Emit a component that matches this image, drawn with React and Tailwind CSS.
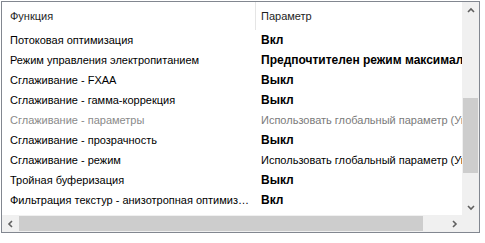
import React from "react";

const rows = [
  { name: "Потоковая оптимизация", value: "Вкл", bold: true },
  { name: "Режим управления электропитанием", value: "Предпочтителен режим максимальной производительности", bold: true },
  { name: "Сглаживание - FXAA", value: "Выкл", bold: true },
  { name: "Сглаживание - гамма-коррекция", value: "Выкл", bold: true },
  { name: "Сглаживание - параметры", value: "Использовать глобальный параметр (Управление от приложения)", muted: true },
  { name: "Сглаживание - прозрачность", value: "Выкл", bold: true },
  { name: "Сглаживание - режим", value: "Использовать глобальный параметр (Управление от приложения)" },
  { name: "Тройная буферизация", value: "Выкл", bold: true },
  { name: "Фильтрация текстур - анизотропная оптимизация", value: "Вкл", bold: true },
];

const Chevron = ({ dir }) => {
  const paths = {
    up: "M1 5 L4 2 L7 5",
    down: "M1 3 L4 6 L7 3",
    left: "M5 1 L2 4 L5 7",
    right: "M3 1 L6 4 L3 7",
  };
  return (
    <svg width="8" height="8" viewBox="0 0 8 8">
      <path d={paths[dir]} fill="none" stroke="#606060" strokeWidth="1.6" />
    </svg>
  );
};

export default function App() {
  return (
    <div className="w-[485px] h-[243px] bg-white pl-px pt-px font-['Liberation_Sans',Arial,sans-serif] text-[11px]">
      <div className="w-[479px] h-[232px] border border-[#828790] flex flex-col">
        <div className="flex flex-1 min-h-0">
          <div className="flex-1 min-w-0 overflow-hidden">
            <div className="flex h-[28px] items-center text-[#1e1e1e]">
              <div className="w-[253px] pl-[8px] shrink-0">Функция</div>
              <div className="h-full border-l border-[#e5e5e5] pl-[5px] flex items-center whitespace-nowrap">Параметр</div>
            </div>
            {rows.map((r, i) => (
              <div key={i} className="flex h-[20px] items-center">
                <div className={`w-[253px] shrink-0 pl-[8px] pr-[4px] truncate ${r.muted ? "text-[#8a8a8a]" : "text-black"}`}>
                  {r.name}
                </div>
                <div
                  className={`pl-[6px] whitespace-nowrap ${r.bold ? "font-bold text-[12px]" : ""} ${r.muted ? "text-[#7a7a7a]" : "text-black"}`}
                >
                  {r.value}
                </div>
              </div>
            ))}
          </div>
          <div className="w-[17px] shrink-0 bg-[#f0f0f0] flex flex-col">
            <div className="h-[17px] flex items-center justify-center">
              <Chevron dir="up" />
            </div>
            <div className="flex-1 pt-[79px] px-px">
              <div className="h-[75px] bg-[#cdcdcd]" />
            </div>
            <div className="h-[17px] flex items-center justify-center">
              <Chevron dir="down" />
            </div>
          </div>
        </div>
        <div className="h-[17px] flex shrink-0 bg-[#f0f0f0]">
          <div className="w-[17px] flex items-center justify-center">
            <Chevron dir="left" />
          </div>
          <div className="flex-1 py-px">
            <div className="w-[404px] h-full bg-[#cdcdcd]" />
          </div>
          <div className="w-[17px] flex items-center justify-center">
            <Chevron dir="right" />
          </div>
          <div className="w-[17px]" />
        </div>
      </div>
    </div>
  );
}
